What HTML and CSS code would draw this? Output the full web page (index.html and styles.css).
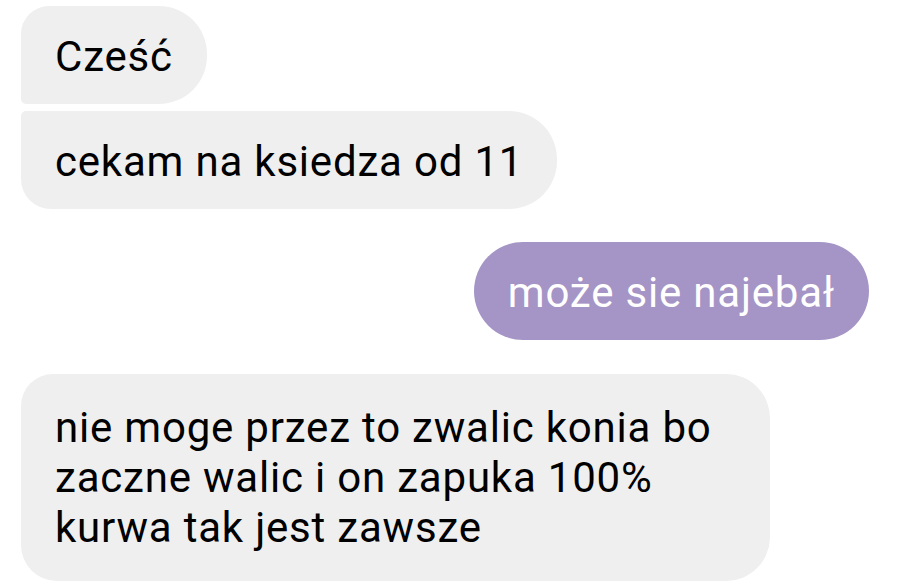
FILE: index.html
```html
<!DOCTYPE html>
<html lang="pl">
<head>
<meta charset="utf-8">
<title>Chat</title>
<link rel="stylesheet" href="styles.css">
</head>
<body>
<div class="chat">
  <div class="group in">
    <div class="bubble in first">Cześć</div>
    <div class="bubble in last">cekam na ksiedza od 11</div>
  </div>
  <div class="group out">
    <div class="bubble out single">może sie najebał</div>
  </div>
  <div class="group in">
    <div class="bubble in single wide">nie moge przez to zwalic konia bo<br>zaczne walic i on zapuka 100%<br>kurwa tak jest zawsze</div>
  </div>
</div>
</body>
</html>
```

FILE: styles.css
```css
html, body {
  margin: 0;
  padding: 0;
  background: #ffffff;
}

.chat {
  width: 915px;
  height: 587px;
  box-sizing: border-box;
  padding: 6px 46px 0 21px;
  display: flex;
  flex-direction: column;
  gap: 33px;
  font-family: Roboto, "Noto Sans", sans-serif;
  font-size: 42px;
  letter-spacing: 0.8px;
  line-height: 50px;
  overflow: hidden;
}

.chat > .group:last-child {
  margin-top: 1px;
}

.group {
  display: flex;
  flex-direction: column;
  gap: 7px;
}

.group.in {
  align-items: flex-start;
}

.group.out {
  align-items: flex-end;
}

.bubble {
  padding: 26px 34px 22px 34px;
  white-space: nowrap;
}

.bubble.in {
  background: #efefef;
  color: #000000;
}

.bubble.out {
  background: #a594c6;
  color: #ffffff;
  border-radius: 49px;
}

.bubble.in.first {
  border-radius: 28px 48px 48px 5px;
}

.bubble.in.last {
  border-radius: 5px 48px 48px 30px;
}

.bubble.in.single {
  border-radius: 32px 44px 44px 36px;
}

.bubble.wide {
  padding: 29px 58px 28px 34px;
}
```
